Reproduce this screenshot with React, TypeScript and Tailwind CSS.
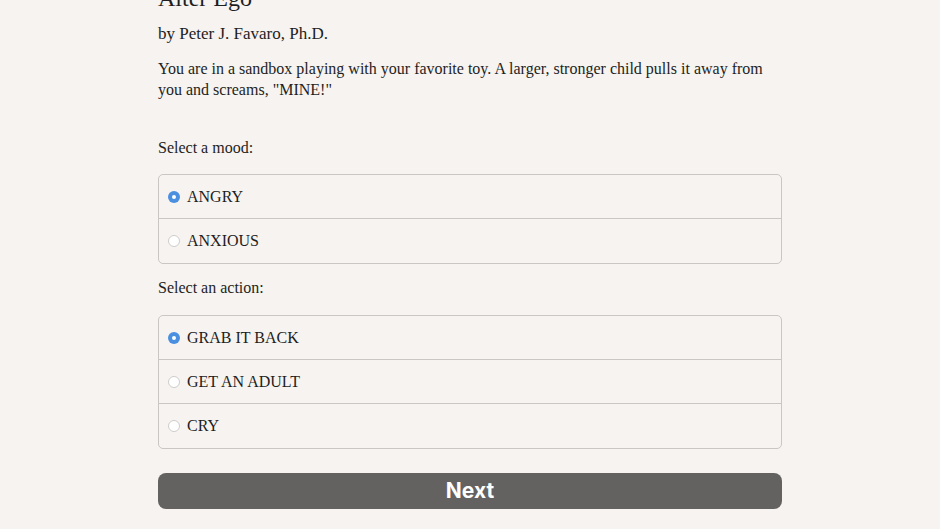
import { useState } from "react";

// ============================================
// Data
// ============================================

const moods = ["ANGRY", "ANXIOUS"];
const actions = ["GRAB IT BACK", "GET AN ADULT", "CRY"];

// ============================================
// Radio Group
// ============================================

function RadioRow({
	label,
	checked,
	isLast,
	onSelect,
}: {
	label: string;
	checked: boolean;
	isLast: boolean;
	onSelect: () => void;
}) {
	return (
		<button
			type="button"
			onClick={onSelect}
			className={
				"flex h-[44px] w-full items-center gap-[7px] pl-[9px] text-left" +
				(isLast ? "" : " border-b border-[#c9c6c4]")
			}>
			{checked ? (
				<span className="flex h-[12px] w-[12px] items-center justify-center rounded-full bg-[#4a8fe0]">
					<span className="h-[4px] w-[4px] rounded-full bg-white" />
				</span>
			) : (
				<span className="h-[12px] w-[12px] rounded-full border border-[#cfcdcb] bg-white" />
			)}
			<span className="text-[16px] leading-none text-[#1e1e1e]">{label}</span>
		</button>
	);
}

function RadioGroup({
	options,
	value,
	onChange,
}: {
	options: string[];
	value: string;
	onChange: (v: string) => void;
}) {
	return (
		<div className="rounded-[5px] border border-[#c9c6c4]">
			{options.map((opt, i) => (
				<RadioRow
					key={opt}
					label={opt}
					checked={opt === value}
					isLast={i === options.length - 1}
					onSelect={() => onChange(opt)}
				/>
			))}
		</div>
	);
}

// ============================================
// App
// ============================================

export default function App() {
	const [mood, setMood] = useState("ANGRY");
	const [action, setAction] = useState("GRAB IT BACK");

	return (
		<div
			className="h-[529px] overflow-hidden bg-[#f6f3f0] text-[#1e1e1e]"
			style={{ fontFamily: '"Liberation Serif", "Times New Roman", serif' }}>
			<div className="mx-auto w-[624px]">
				<h1 className="-mt-[18px] text-[24px] leading-[32px]">Alter Ego</h1>
				<p className="mt-[9px] text-[17px] leading-[22px]">by Peter J. Favaro, Ph.D.</p>
				<p className="mt-[13px] text-[16px] leading-[21px]">
					You are in a sandbox playing with your favorite toy. A larger, stronger child pulls it away from
					you and screams, "MINE!"
				</p>

				<p className="mt-[37px] text-[16px] leading-[21px]">Select a mood:</p>
				<div className="mt-[16px]">
					<RadioGroup options={moods} value={mood} onChange={setMood} />
				</div>

				<p className="mt-[13px] text-[16px] leading-[21px]">Select an action:</p>
				<div className="mt-[17px]">
					<RadioGroup options={actions} value={action} onChange={setAction} />
				</div>

				<button
					type="button"
					className="mt-[24px] flex h-[36px] w-full items-center justify-center rounded-[8px] bg-[#636261] text-[21px] font-bold text-white"
					style={{ fontFamily: "Inter, Roboto, sans-serif" }}>
					Next
				</button>
			</div>
		</div>
	);
}
